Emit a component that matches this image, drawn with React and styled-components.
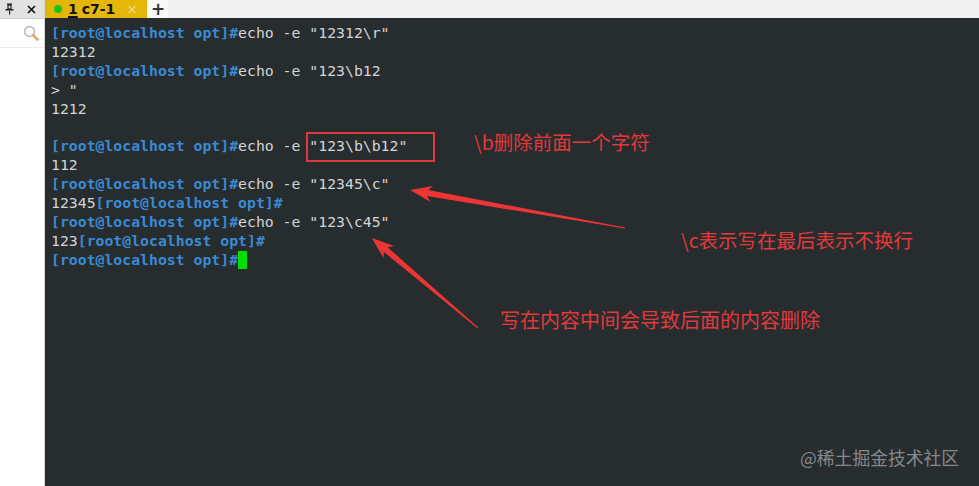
import React from "react";
import styled, { createGlobalStyle } from "styled-components";

const Global = createGlobalStyle`
  html, body { margin: 0; padding: 0; background: #272c2f; }
  body { width: 979px; height: 486px; overflow: hidden; }
`;

const Page = styled.div`
  position: relative;
  display: flex;
  width: 979px;
  height: 486px;
  font-family: "DejaVu Sans", sans-serif;
`;

const Sidebar = styled.aside`
  width: 44px;
  flex: none;
  display: flex;
  flex-direction: column;
  background: #ffffff;
  border-right: 1px solid #d6d6d6;
`;

const SideHeader = styled.div`
  height: 18px;
  display: flex;
  align-items: center;
  justify-content: space-between;
  padding: 0 8px 0 5px;
  background: #e2e2e2;
  border-bottom: 1px solid #cfcfcf;
`;

const SearchRow = styled.div`
  height: 28px;
  display: flex;
  align-items: center;
  justify-content: flex-end;
  padding-right: 5px;
  border-bottom: 1px solid #ececec;
`;

const Main = styled.main`
  flex: 1;
  display: flex;
  flex-direction: column;
  min-width: 0;
`;

const TabBar = styled.div`
  height: 18px;
  display: flex;
  align-items: stretch;
  background: #f0f0f0;
`;

const Tab = styled.div`
  width: 102px;
  display: flex;
  align-items: center;
  gap: 6px;
  padding-left: 9px;
  background: ${(p) => (p.$active ? "#e4b609" : "#f8f8f8")};
  color: #111;
  box-sizing: border-box;
  white-space: nowrap;
`;

const AddTab = styled.div`
  width: 20px;
  margin-left: 1px;
  display: flex;
  align-items: center;
  justify-content: center;
  background: #f8f8f8;
  font: bold 17px/18px "DejaVu Sans", sans-serif;
  color: #333;
`;

const Dot = styled.span`
  width: 8px;
  height: 8px;
  border-radius: 50%;
  background: #1bc41b;
  flex: none;
`;

const TabTitle = styled.span`
  flex: 1;
  font: bold 14px/18px "DejaVu Sans", sans-serif;
  white-space: nowrap;
  u { text-decoration-thickness: 1.5px; text-underline-offset: 2px; margin-right: 4px; }
`;

const TabClose = styled.span`
  color: #f2dd8a;
  font: 14px/18px "DejaVu Sans", sans-serif;
  margin-right: 9px;
`;

const Terminal = styled.div`
  flex: 1;
  background: #272c2f;
  padding: 6px 0 0 6px;
  font-family: "DejaVu Sans Mono", monospace;
  font-size: 14.8px;
  line-height: 18.9px;
  color: #d4d4d4;
  white-space: pre;
`;

const Line = styled.div`
  height: 18.9px;
`;

const Prompt = styled.span`
  color: #3a8bd3;
  font-weight: bold;
`;

const Cursor = styled.span`
  display: inline-block;
  width: 9px;
  height: 18px;
  background: #00e000;
  vertical-align: top;
`;

const RedBox = styled.div`
  position: absolute;
  left: 306px;
  top: 132px;
  width: 125px;
  height: 26px;
  border: 2px solid #e03a3c;
`;

const Note = styled.div`
  position: absolute;
  left: ${(p) => p.$x}px;
  top: ${(p) => p.$y}px;
  font-family: "Noto Sans CJK SC", sans-serif;
  font-size: ${(p) => p.$size || 19.5}px;
  font-weight: 400;
  line-height: 1;
  color: #e2393b;
  white-space: nowrap;
`;

const Watermark = styled.div`
  position: absolute;
  left: 800px;
  top: 449px;
  font-family: "Noto Sans CJK SC", sans-serif;
  font-size: 17.8px;
  line-height: 1;
  color: #85898c;
  white-space: nowrap;
`;

const Overlay = styled.svg`
  position: absolute;
  left: 0;
  top: 0;
  pointer-events: none;
`;

const P = "[root@localhost opt]#";

export default function App() {
  return (
    <>
      <Global />
      <Page>
        <Sidebar>
          <SideHeader>
            <svg width="9" height="12" viewBox="0 0 9 12">
              <rect x="2" y="0.5" width="5" height="1.5" fill="#222" />
              <rect x="3" y="2" width="3" height="4" fill="none" stroke="#222" strokeWidth="1.2" />
              <rect x="0.5" y="6" width="8" height="1.5" fill="#222" />
              <rect x="4" y="7.5" width="1.2" height="4" fill="#222" />
            </svg>
            <svg width="9" height="9" viewBox="0 0 9 9">
              <path d="M1 1 L8 8 M8 1 L1 8" stroke="#111" strokeWidth="1.6" />
            </svg>
          </SideHeader>
          <SearchRow>
            <svg width="16" height="16" viewBox="0 0 16 16">
              <circle cx="6.5" cy="6.5" r="5" fill="#fafafa" stroke="#b8b8b8" strokeWidth="1.4" />
              <path d="M10.2 10.2 L14.5 14.5" stroke="#e0a868" strokeWidth="2.6" strokeLinecap="round" />
            </svg>
          </SearchRow>
        </Sidebar>
        <Main>
          <TabBar>
            <Tab $active>
              <Dot />
              <TabTitle>
                <u>1</u>c7-1
              </TabTitle>
              <TabClose>×</TabClose>
            </Tab>
            <AddTab>+</AddTab>
          </TabBar>
          <Terminal>
            <Line><Prompt>{P}</Prompt>echo -e "12312\r"</Line>
            <Line>12312</Line>
            <Line><Prompt>{P}</Prompt>echo -e "123\b12</Line>
            <Line>{'> "'}</Line>
            <Line>1212</Line>
            <Line> </Line>
            <Line><Prompt>{P}</Prompt>echo -e "123\b\b12"</Line>
            <Line>112</Line>
            <Line><Prompt>{P}</Prompt>echo -e "12345\c"</Line>
            <Line>12345<Prompt>{P}</Prompt></Line>
            <Line><Prompt>{P}</Prompt>echo -e "123\c45"</Line>
            <Line>123<Prompt>{P}</Prompt></Line>
            <Line><Prompt>{P}</Prompt><Cursor /></Line>
          </Terminal>
        </Main>

        <RedBox />
        <Note $x={474} $y={132}>\b删除前面一个字符</Note>
        <Note $x={681} $y={230}>\c表示写在最后表示不换行</Note>
        <Note $x={500} $y={310} $size={20}>写在内容中间会导致后面的内容删除</Note>
        <Watermark>@稀土掘金技术社区</Watermark>

        <Overlay width="979" height="486" viewBox="0 0 979 486">
          <polygon
            fill="#ee3535"
            points="410,190 433.1,185.9 428.2,190.1 625.1,227.5 624.9,228.5 427.2,196.1 430.3,201.7"
          />
          <polygon
            fill="#ee3535"
            points="372,238 394,246.1 387.6,247.3 478.3,327.6 477.7,328.4 383.8,251.9 383.6,258.3"
          />
        </Overlay>
      </Page>
    </>
  );
}
